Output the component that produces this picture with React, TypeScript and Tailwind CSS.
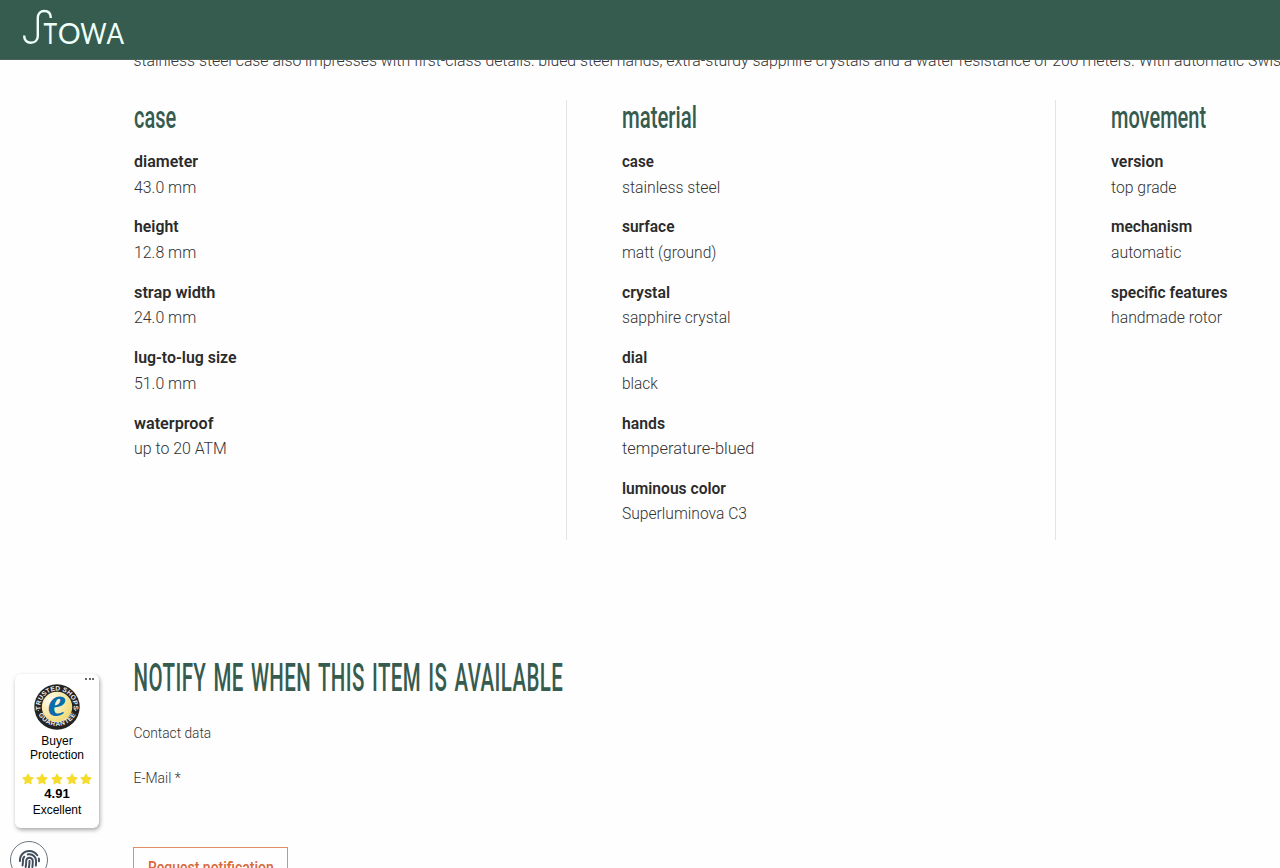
import { useLayoutEffect, useRef, useState } from "react";
import { FaFingerprint, FaStar } from "react-icons/fa";

type FitProps = {
  children: string;
  width: number;
  className?: string;
};

type Spec = {
  label: string;
  labelWidth: number;
  value: string;
  valueWidth: number;
};

type SpecColumnProps = {
  title: string;
  titleWidth: number;
  specs: Spec[];
  className?: string;
};

const caseSpecs: Spec[] = [
  { label: "diameter", labelWidth: 64, value: "43.0 mm", valueWidth: 62.5 },
  { label: "height", labelWidth: 45, value: "12.8 mm", valueWidth: 62.5 },
  { label: "strap width", labelWidth: 81, value: "24.0 mm", valueWidth: 62.5 },
  { label: "lug-to-lug size", labelWidth: 103, value: "51.0 mm", valueWidth: 62.5 },
  { label: "waterproof", labelWidth: 79.5, value: "up to 20 ATM", valueWidth: 92.5 },
];

const materialSpecs: Spec[] = [
  { label: "case", labelWidth: 32, value: "stainless steel", valueWidth: 98.5 },
  { label: "surface", labelWidth: 52.5, value: "matt (ground)", valueWidth: 94.5 },
  { label: "crystal", labelWidth: 48, value: "sapphire crystal", valueWidth: 109 },
  { label: "dial", labelWidth: 25.5, value: "black", valueWidth: 35.5 },
  { label: "hands", labelWidth: 43, value: "temperature-blued", valueWidth: 132.5 },
  { label: "luminous color", labelWidth: 104, value: "Superluminova C3", valueWidth: 125 },
];

const movementSpecs: Spec[] = [
  { label: "version", labelWidth: 52, value: "top grade", valueWidth: 66 },
  { label: "mechanism", labelWidth: 81, value: "automatic", valueWidth: 70 },
  { label: "specific features", labelWidth: 116, value: "handmade rotor", valueWidth: 111 },
];

// Condenses or widens one line of text to a given width.
function Fit({ children, width, className = "" }: FitProps) {
  const ref = useRef<HTMLSpanElement>(null);
  const [scale, setScale] = useState(1);

  useLayoutEffect(() => {
    if (ref.current) {
      setScale(width / ref.current.offsetWidth);
    }
  }, [width]);

  return (
    <span
      ref={ref}
      className={`inline-block origin-left whitespace-nowrap ${className}`}
      style={{ transform: `scaleX(${scale})` }}
    >
      {children}
    </span>
  );
}

function Logo() {
  return (
    <svg width="104" height="40" viewBox="22 8 104 40" fill="none" aria-label="Stowa">
      <path
        d="M24.2 35.5C24 40.3 27 42.8 30.8 42.8C35 42.8 37.8 40.2 37.8 36V18C37.8 13.5 40.5 11 44.3 11C48.3 11 50.8 13.5 50.8 18"
        stroke="#effffa"
        strokeWidth="2.4"
      />
      <g fill="#effffa" className="font-['Lato',sans-serif] text-[28px]">
        <text x="43.4" y="43.5" textLength="13.6" lengthAdjust="spacingAndGlyphs">T</text>
        <text x="57.8" y="43.5" textLength="23" lengthAdjust="spacingAndGlyphs">O</text>
        <text x="80.2" y="43.5" textLength="26.4" lengthAdjust="spacingAndGlyphs">W</text>
        <text x="106.6" y="43.5" textLength="17.6" lengthAdjust="spacingAndGlyphs">A</text>
      </g>
    </svg>
  );
}

function SpecColumn({ title, titleWidth, specs, className = "" }: SpecColumnProps) {
  return (
    <section className={`h-[440px] shrink-0 ${className}`}>
      <h3 className="h-[49px] text-[32px] leading-[35px] font-medium text-[#365b4f]">
        <Fit width={titleWidth}>{title}</Fit>
      </h3>
      <dl className="flex flex-col gap-[14.4px] text-[16.5px] leading-[25.5px]">
        {specs.map((spec) => (
          <div key={spec.label}>
            <dt className="h-[25.5px] font-semibold text-[#2b2b2b]">
              <Fit width={spec.labelWidth}>{spec.label}</Fit>
            </dt>
            <dd className="h-[25.5px] font-light text-[#333]">
              <Fit width={spec.valueWidth}>{spec.value}</Fit>
            </dd>
          </div>
        ))}
      </dl>
    </section>
  );
}

function TrustSeal() {
  return (
    <svg width="46" height="46" viewBox="0 0 46 46" className="block">
      <defs>
        <radialGradient id="gold" cx="0.3" cy="0.3" r="0.85">
          <stop offset="0" stopColor="#fffdf0" />
          <stop offset="1" stopColor="#efd566" />
        </radialGradient>
        <path id="seal-top" d="M7 27.5A16.6 16.6 0 1 1 39 27.5" />
        <path id="seal-bottom" d="M2.4 25A21 21 0 0 0 43.6 25" />
      </defs>
      <circle cx="23" cy="23" r="22.7" fill="#232323" />
      <circle cx="23" cy="23" r="15.2" fill="url(#gold)" />
      <g fill="#ededed" className="font-['Liberation_Sans',sans-serif] text-[6.6px] font-bold">
        <text textAnchor="middle">
          <textPath href="#seal-top" startOffset="50%" textLength="57">
            TRUSTED SHOPS
          </textPath>
        </text>
        <text textAnchor="middle">
          <textPath href="#seal-bottom" startOffset="50%" textLength="46">
            GUARANTEE
          </textPath>
        </text>
      </g>
      <circle cx="4.3" cy="26.5" r="0.6" fill="#ededed" />
      <circle cx="41.7" cy="26.5" r="0.6" fill="#ededed" />
      <text
        x="22.8"
        y="32.3"
        textAnchor="middle"
        fill="#0a6dab"
        className="font-['Liberation_Serif',serif] text-[41px] font-bold italic"
      >
        e
      </text>
    </svg>
  );
}

function TrustBadge() {
  return (
    <aside className="absolute top-[674px] left-[15px] flex h-[154px] w-[84px] flex-col items-center rounded-[6px] bg-white pt-[10px] font-['Liberation_Sans',sans-serif] text-[12px] leading-[14px] text-black shadow-[1px_2px_4px_rgba(0,0,0,0.35)]">
      <div className="absolute top-[4px] right-[5px] flex gap-[1.5px]">
        <i className="size-[2px] rounded-full bg-[#333]" />
        <i className="size-[2px] rounded-full bg-[#333]" />
        <i className="size-[2px] rounded-full bg-[#333]" />
      </div>
      <TrustSeal />
      <p className="mt-[4px] text-center">
        Buyer
        <br />
        Protection
      </p>
      <div className="mt-[11px] flex gap-[2.6px] text-[#f5dc2e]">
        <FaStar size={12} />
        <FaStar size={12} />
        <FaStar size={12} />
        <FaStar size={12} />
        <FaStar size={12} />
      </div>
      <strong className="mt-[2px] text-[13px]">4.91</strong>
      <span className="mt-[2px]">Excellent</span>
    </aside>
  );
}

export default function App() {
  return (
    <div className="relative h-[868px] w-[1280px] overflow-hidden bg-[#fefefe] font-['Roboto',sans-serif]">
      <header className="relative z-10 h-[60px] border-b border-[#4a645b] bg-[#365b4f] pt-[8px] pl-[22px]">
        <Logo />
      </header>

      <main className="pl-[133px]">
        <p className="-mt-[12.5px] h-[25px] text-[16.5px] leading-[25px] font-light text-[#333]">
          <Fit width={1155} className="translate-x-[0.5px]">
            stainless steel case also impresses with first-class details: blued steel hands, extra-sturdy sapphire crystals and a water resistance of 200 meters. With automatic Swiss
          </Fit>
        </p>

        <div className="mt-[27.5px] flex">
          <SpecColumn
            title="case"
            titleWidth={42.5}
            specs={caseSpecs}
            className="w-[434px] border-r border-[#e4e4e4] pl-[0.5px]"
          />
          <SpecColumn
            title="material"
            titleWidth={75}
            specs={materialSpecs}
            className="w-[489px] border-r border-[#e4e4e4] pl-[55px]"
          />
          <SpecColumn
            title="movement"
            titleWidth={95}
            specs={movementSpecs}
            className="w-[489px] pl-[55px]"
          />
        </div>

        <section className="mt-[115px] text-[#333]">
          <h2 className="h-[47px] text-[38px] leading-[47px] font-medium tracking-[0.02em] text-[#365b4f] [word-spacing:0.08em]">
            <Fit width={430} className="translate-x-[0.5px]">
              NOTIFY ME WHEN THIS ITEM IS AVAILABLE
            </Fit>
          </h2>
          <p className="mt-[19px] h-[24px] text-[15px] leading-[24px] font-light">
            <Fit width={78} className="translate-x-[0.5px]">
              Contact data
            </Fit>
          </p>
          <label className="mt-[21px] block h-[24px] text-[14px] leading-[24px] font-light">
            <Fit width={47} className="translate-x-[0.5px]">
              E-Mail *
            </Fit>
          </label>
          <button className="mt-[57px] block h-[40px] w-[155px] border border-[#e08e68] pl-[14px] text-left text-[17px] leading-[37px] font-medium text-[#d9683c]">
            <Fit width={126}>Request notification</Fit>
          </button>
        </section>
      </main>

      <TrustBadge />
      <button className="absolute top-[841px] left-[10px] flex size-[38px] items-center justify-center rounded-full border border-[#6b757e] bg-white text-[#3f4d5c]">
        <FaFingerprint size={21} />
      </button>
    </div>
  );
}
